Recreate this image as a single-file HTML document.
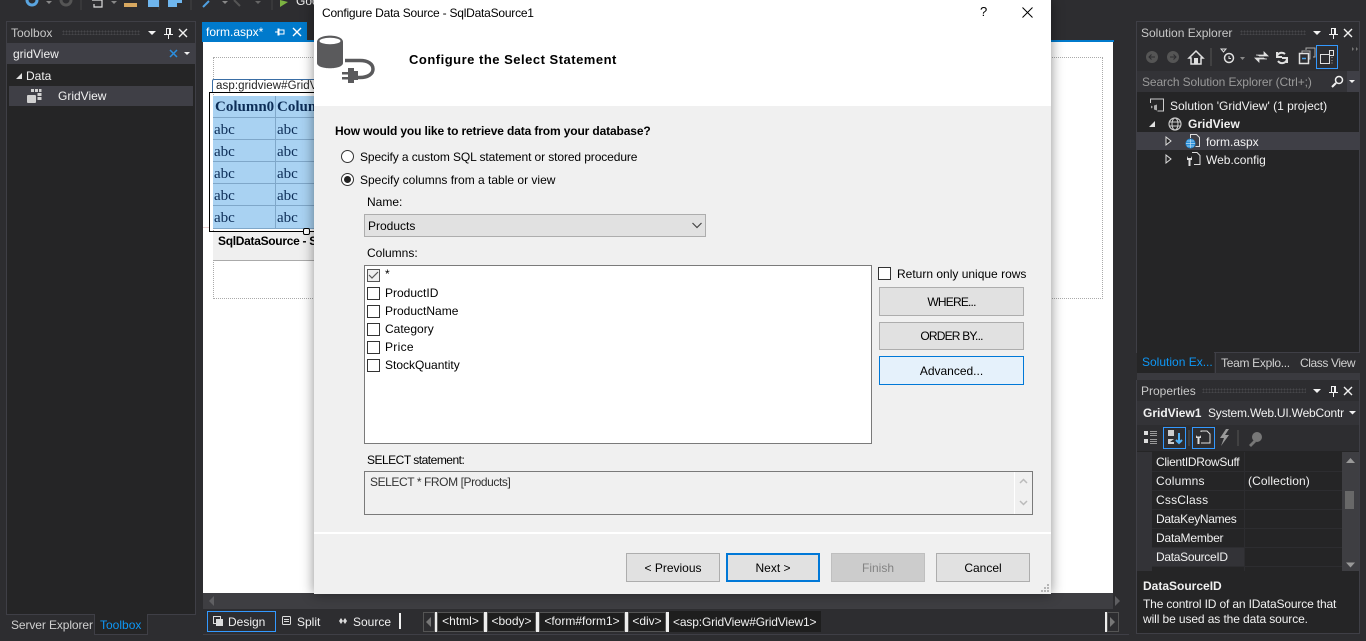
<!DOCTYPE html>
<html><head><meta charset="utf-8"><style>
html,body{margin:0;padding:0;background:#2d2d30;width:1366px;height:641px;overflow:hidden}
body{position:relative;font-family:"Liberation Sans",sans-serif;font-size:12px;color:#f1f1f1}
.a,.t,.b{position:absolute}
.t{white-space:nowrap;line-height:16px;letter-spacing:0}
.k{color:#000}
.b{box-sizing:border-box;background:#e1e1e1;border:1px solid #adadad;color:#000;text-align:center;line-height:29px;letter-spacing:0}
.cb{position:absolute;box-sizing:border-box;width:13px;height:13px;background:#fff;border:1px solid #333;left:367px}
.cell{position:absolute;box-sizing:border-box;font:15px "Liberation Serif",serif;color:#0c2d57;padding:2px 0 0 1px;background:#a9d2f2;line-height:20px}
svg{position:absolute;overflow:visible}
.sep{position:absolute;background:#2d2d30}
.path{position:absolute;box-sizing:border-box;top:612px;height:20px;background:#1e1e1e;border:1px solid #555;line-height:17px;text-align:center;color:#f1f1f1}
</style></head><body>

<!-- top toolbar -->
<svg style="left:0;top:0" width="320" height="8">
<circle cx="32" cy="0" r="5" fill="none" stroke="#5aa5e0" stroke-width="3"/>
<path d="M46 1l6 0-3 3z" fill="#888"/>
<circle cx="66" cy="0" r="5" fill="none" stroke="#555" stroke-width="3"/>
<path d="M81 0v10M159 0v10M191 0v10M272 0v10" stroke="#444"/>
<path d="M92 0h10v7h-8v-3" fill="none" stroke="#ddd" stroke-width="1.2"/>
<path d="M111 1l6 0-3 3z" fill="#888"/>
<path d="M124 3h13v4h-13z" fill="#d8a860"/>
<rect x="148" y="0" width="11" height="7" fill="#6fb6ee"/>
<rect x="168" y="0" width="9" height="7" fill="#6fb6ee"/><rect x="175" y="0" width="7" height="3" fill="#6fb6ee"/>
<path d="M203 7l6-6" stroke="#4f9fe0" stroke-width="2"/><path d="M222 1l6 0-3 3z" fill="#888"/>
<path d="M234 0l6 6" stroke="#555" stroke-width="2"/><path d="M255 1l6 0-3 3z" fill="#666"/>
<path d="M280 0v7l8-5z" fill="#7db342"/>
</svg>
<div class="t" style="left:296px;top:-7px;color:#f1f1f1">Google</div>

<!-- Toolbox -->
<div class="a" style="left:6px;top:21px;width:190px;height:594px;box-sizing:border-box;border:1px solid #3f3f46;background:#252526"></div>
<div class="a" style="left:7px;top:22px;width:188px;height:21px;background:#2d2d30"></div>
<div class="t" style="left:11px;top:25px;color:#c8c8c8">Toolbox</div>
<div class="a" style="left:62px;top:30px;width:78px;height:5px;background:radial-gradient(#46464a 40%,transparent 45%) 0 0/3px 3px"></div>
<svg style="left:146px;top:28px" width="44" height="12"><path d="M2 3h8l-4 4z" fill="#f1f1f1"/><path d="M20 0h5v6h2v1h-4v4h-1v-4h-4v-1h2zM21 1v5h2v-5z" fill="#f1f1f1"/><path d="M33 1l8 8M41 1l-8 8" stroke="#f1f1f1" stroke-width="1.4"/></svg>
<div class="a" style="left:7px;top:43px;width:188px;height:21px;background:#3f3f46"></div>
<div class="t" style="left:13px;top:46px;color:#f1f1f1">gridView</div>
<svg style="left:169px;top:49px" width="22" height="10"><path d="M1 1l7 7M8 1l-7 7" stroke="#2b8fe0" stroke-width="1.5"/><path d="M15 3h6l-3 3z" fill="#f1f1f1"/></svg>
<svg style="left:15px;top:72px" width="8" height="8"><path d="M7 1v6h-6z" fill="#e0e0e0"/></svg>
<div class="t" style="left:26px;top:68px">Data</div>
<div class="a" style="left:9px;top:86px;width:184px;height:20px;background:#3f3f46"></div>
<svg style="left:27px;top:89px" width="15" height="14"><rect x="0" y="6" width="9" height="8" rx="1" fill="#d0d0d0"/><path d="M4 0h3v3h-3zM8 0h3v3h-3zM12 0h2.500v3h-2.500zM10.500 4h4v3h-4zM10.500 8h4v3h-4z" fill="#d0d0d0"/></svg>
<div class="t" style="left:58px;top:88px">GridView</div>
<div class="t" style="left:11px;top:617px;color:#d0d0d0;letter-spacing:-.1px">Server Explorer</div>
<div class="a" style="left:94px;top:614px;width:54px;height:21px;box-sizing:border-box;background:#252526;border:1px solid #3f3f46;border-top:0"></div>
<div class="t" style="left:100px;top:617px;color:#0e97f5">Toolbox</div>

<!-- Editor -->
<div class="a" style="left:202px;top:22px;width:105px;height:18px;background:#007acc"></div>
<div class="t" style="left:206px;top:24px;color:#fff">form.aspx*</div>
<svg style="left:274px;top:27px" width="30" height="10"><path d="M1 5h3M4 2v6h1v-1h5v-4h-5v-1zM5 3v4" stroke="#fff" fill="none" stroke-width="1"/><path d="M19 1l8 8M27 1l-8 8" stroke="#fff" stroke-width="1.4"/></svg>
<div class="a" style="left:202px;top:40px;width:912px;height:2px;background:#007acc"></div>
<div class="a" style="left:203px;top:42px;width:910px;height:551px;background:#fff"></div>
<div class="a" style="left:213px;top:57px;width:890px;height:242px;box-sizing:border-box;border:1px dotted #aaa"></div>
<div class="a" style="left:203px;top:593px;width:910px;height:16px;background:#3e3e42"></div>
<div class="a" style="left:1113px;top:42px;width:16px;height:567px;background:#2d2d30"></div>
<svg style="left:209px;top:596px" width="6" height="10"><path d="M5 0v10l-5-5z" fill="#5f5f62"/></svg>
<svg style="left:1115px;top:596px" width="6" height="10"><path d="M0 0v10l5-5z" fill="#5f5f62"/></svg>

<!-- grid -->
<div class="a" style="left:212px;top:79px;width:110px;height:13px;box-sizing:border-box;background:#fff;border:1px solid #3a6ea5;border-bottom:0;border-radius:2px 2px 0 0"></div>
<div class="t k" style="left:216px;top:78px;font-size:11.5px;color:#222;letter-spacing:.1px">asp:gridview#GridV</div>
<div class="a" style="left:209px;top:92px;width:110px;height:140px;box-sizing:border-box;border:1px solid #000"></div>
<div class="a" style="left:213px;top:96px;width:110px;height:133px;background:#7fa7c9"></div>
<div class="cell" style="left:213px;top:96px;width:62px;height:21px;font-weight:bold;padding-top:1px;padding-left:2px">Column0</div>
<div class="cell" style="left:276px;top:96px;width:50px;height:21px;font-weight:bold;padding-top:1px">Column</div>
<div class="cell" style="left:213px;top:118px;width:62px;height:21px">abc</div><div class="cell" style="left:276px;top:118px;width:50px;height:21px">abc</div>
<div class="cell" style="left:213px;top:140px;width:62px;height:21px">abc</div><div class="cell" style="left:276px;top:140px;width:50px;height:21px">abc</div>
<div class="cell" style="left:213px;top:162px;width:62px;height:21px">abc</div><div class="cell" style="left:276px;top:162px;width:50px;height:21px">abc</div>
<div class="cell" style="left:213px;top:184px;width:62px;height:21px">abc</div><div class="cell" style="left:276px;top:184px;width:50px;height:21px">abc</div>
<div class="cell" style="left:213px;top:206px;width:62px;height:22px">abc</div><div class="cell" style="left:276px;top:206px;width:50px;height:22px">abc</div>
<div class="a" style="left:203px;top:227px;width:6px;height:1px;background:#e8d0d0"></div>
<div class="a" style="left:213px;top:232px;width:110px;height:28px;background:#efefef;border-bottom:1px solid #aaa"></div>
<div class="t k" style="left:218px;top:233px;font-weight:bold;letter-spacing:-.3px">SqlDataSource - S</div>
<div class="a" style="left:303px;top:228px;width:7px;height:7px;box-sizing:border-box;background:#fff;border:1px solid #000;border-radius:2px"></div>

<!-- Dialog shadow & body -->
<div class="a" style="left:314px;top:0;width:737px;height:594px;background:#f0f0f0;box-shadow:0 0 12px rgba(0,0,0,.45)"></div>
<div class="a" style="left:314px;top:0;width:737px;height:106px;background:#fff"></div>
<div class="t k" style="left:322px;top:5px;letter-spacing:-.22px">Configure Data Source - SqlDataSource1</div>
<div class="t k" style="left:980px;top:4px;font-size:13px">?</div>
<svg style="left:1022px;top:7px" width="11" height="11"><path d="M.5.5l10 10M10.500.5l-10 10" stroke="#000" stroke-width="1"/></svg>
<!-- db icon -->
<svg style="left:317px;top:34px" width="60" height="52">
<path d="M0 8C0-.5 26-.5 26 8V29C26 36 0 36 0 29z" fill="#5a5a5c"/>
<ellipse cx="13" cy="7" rx="10.500" ry="3.200" fill="#fff"/>
<path d="M28 26.500h15c8 0 13 3.500 13 8.500s-5 8.500-13 8.500h-3" fill="none" stroke="#5a5a5c" stroke-width="3.500"/>
<path d="M25 38h6v2.500h-6zM25 43h6v2.500h-6z" fill="#5a5a5c"/>
<path d="M31 34h6v3h4v9h-4v3h-6z" fill="#5a5a5c"/>
</svg>
<div class="t k" style="left:409px;top:52px;font-size:13px;font-weight:bold;letter-spacing:.5px">Configure the Select Statement</div>

<div class="t k" style="left:335px;top:123px;font-weight:bold;letter-spacing:-.13px">How would you like to retrieve data from your database?</div>
<svg style="left:341px;top:150px" width="14" height="36"><circle cx="6.500" cy="6.500" r="6" fill="#fff" stroke="#333"/><circle cx="6.500" cy="29.500" r="6" fill="#fff" stroke="#333"/><circle cx="6.500" cy="29.500" r="3.500" fill="#222"/></svg>
<div class="t k" style="left:360px;top:149px;letter-spacing:-.1px">Specify a custom SQL statement or stored procedure</div>
<div class="t k" style="left:360px;top:172px">Specify columns from a table or view</div>
<div class="t k" style="left:367px;top:194px">Name:</div>
<div class="a" style="left:364px;top:214px;width:342px;height:23px;box-sizing:border-box;background:#e1e1e1;border:1px solid #adadad"></div>
<div class="t k" style="left:368px;top:218px">Products</div>
<svg style="left:692px;top:222px" width="10" height="7"><path d="M.5 1l4.500 4.500L9.500 1" fill="none" stroke="#444" stroke-width="1.200"/></svg>
<div class="t k" style="left:367px;top:245px">Columns:</div>
<div class="a" style="left:364px;top:265px;width:508px;height:179px;box-sizing:border-box;background:#fff;border:1px solid #7a7a7a"></div>
<div class="cb" style="top:269px;border-color:#555;background:#eee"></div>
<svg style="left:368px;top:271px" width="11" height="9"><path d="M1 4l3 3 6-6" fill="none" stroke="#555" stroke-width="1.200"/></svg>
<div class="t k" style="left:385px;top:266px">*</div>
<div class="cb" style="top:287px"></div><div class="t k" style="left:385px;top:285px">ProductID</div>
<div class="cb" style="top:305px"></div><div class="t k" style="left:385px;top:303px">ProductName</div>
<div class="cb" style="top:323px"></div><div class="t k" style="left:385px;top:321px">Category</div>
<div class="cb" style="top:341px"></div><div class="t k" style="left:385px;top:339px;letter-spacing:.3px">Price</div>
<div class="cb" style="top:359px"></div><div class="t k" style="left:385px;top:357px">StockQuantity</div>
<div class="cb" style="left:878px;top:267px"></div>
<div class="t k" style="left:897px;top:266px">Return only unique rows</div>
<div class="b" style="left:879px;top:287px;width:145px;height:29px;letter-spacing:-.8px">WHERE...</div>
<div class="b" style="left:879px;top:322px;width:145px;height:28px;line-height:27px;letter-spacing:-.8px">ORDER BY...</div>
<div class="b" style="left:879px;top:356px;width:145px;height:29px;background:#e5f1fb;border-color:#0078d7">Advanced...</div>
<div class="t k" style="left:367px;top:452px;letter-spacing:-.5px">SELECT statement:</div>
<div class="a" style="left:364px;top:471px;width:669px;height:44px;box-sizing:border-box;background:#f0f0f0;border:1px solid #7a7a7a"></div>
<div class="a" style="left:1014px;top:472px;width:1px;height:42px;background:#fff"></div>
<svg style="left:1019px;top:478px" width="9" height="28"><path d="M1 5l3.500-3.500L8 5M1 23l3.500 3.500L8 23" fill="none" stroke="#bbb" stroke-width="1.500"/></svg>
<div class="t k" style="left:370px;top:474px;color:#333;letter-spacing:-.42px">SELECT * FROM [Products]</div>
<div class="a" style="left:314px;top:532px;width:737px;height:2px;background:#fff"></div>
<div class="b" style="left:626px;top:553px;width:94px;height:29px">&lt; Previous</div>
<div class="b" style="left:726px;top:553px;width:94px;height:29px;border:2px solid #0078d7;line-height:27px">Next &gt;</div>
<div class="b" style="left:831px;top:553px;width:94px;height:29px;background:#ccc;border-color:#bfbfbf;color:#838383">Finish</div>
<div class="b" style="left:936px;top:553px;width:94px;height:29px">Cancel</div>
<svg style="left:1041px;top:584px" width="9" height="9"><path d="M6 0h2v2h-2zM3 3h2v2h-2zM6 3h2v2h-2zM0 6h2v2h-2zM3 6h2v2h-2zM6 6h2v2h-2z" fill="#b5b5b5"/></svg>

<!-- bottom bar -->
<div class="a" style="left:203px;top:609px;width:926px;height:25px;background:#2d2d30;border-bottom:1px solid #3f3f46"></div>
<div class="a" style="left:207px;top:611px;width:69px;height:21px;box-sizing:border-box;border:1px solid #3399ff"></div>
<svg style="left:213px;top:616px" width="11" height="11"><path d="M.5.5h7v7h-7z" fill="none" stroke="#ddd"/><rect x="3" y="3" width="7" height="7" fill="#ddd"/></svg>
<div class="t" style="left:228px;top:614px">Design</div>
<svg style="left:282px;top:616px" width="10" height="10"><rect x=".5" y=".5" width="8" height="8" rx="1" fill="none" stroke="#ddd"/><path d="M2 3.500h5M2 5.500h5" stroke="#ddd"/></svg>
<div class="t" style="left:297px;top:614px">Split</div>
<svg style="left:338px;top:617px" width="10" height="8"><path d="M3 1L1 4l2 3 2-3zM7 1L5 4l2 3 2-3z" fill="#ddd"/></svg>
<div class="t" style="left:353px;top:614px">Source</div>
<div class="a" style="left:399px;top:613px;width:2px;height:16px;background:#f1f1f1"></div>
<div class="a" style="left:423px;top:612px;width:12px;height:20px;box-sizing:border-box;border:1px solid #555"></div>
<svg style="left:426px;top:617px" width="6" height="10"><path d="M5 0v10l-5-5z" fill="#777"/></svg>
<div class="a" style="left:435px;top:612px;width:2px;height:20px;background:#eee"></div>
<div class="path" style="left:437px;width:47px">&lt;html&gt;</div>
<div class="a" style="left:484px;top:612px;width:3px;height:20px;background:#eee"></div>
<div class="path" style="left:487px;width:49px">&lt;body&gt;</div>
<div class="a" style="left:536px;top:612px;width:3px;height:20px;background:#eee"></div>
<div class="path" style="left:539px;width:86px">&lt;form#form1&gt;</div>
<div class="a" style="left:625px;top:612px;width:3px;height:20px;background:#eee"></div>
<div class="path" style="left:628px;width:38px">&lt;div&gt;</div>
<div class="a" style="left:666px;top:612px;width:3px;height:20px;background:#eee"></div>
<div class="a" style="left:669px;top:611px;width:152px;height:21px;background:#1e1e1e"></div>
<div class="t" style="left:673px;top:614px;letter-spacing:-.15px">&lt;asp:GridView#GridView1&gt;</div>
<div class="a" style="left:1105px;top:612px;width:2px;height:20px;background:#eee"></div>
<div class="a" style="left:1107px;top:612px;width:12px;height:20px;box-sizing:border-box;border:1px solid #555"></div>
<svg style="left:1110px;top:617px" width="6" height="10"><path d="M0 0v10l5-5z" fill="#777"/></svg>

<!-- Solution Explorer -->
<div class="a" style="left:1136px;top:21px;width:224px;height:332px;box-sizing:border-box;border:1px solid #3f3f46;background:#252526"></div>
<div class="a" style="left:1137px;top:22px;width:222px;height:49px;background:#2d2d30"></div>
<div class="t" style="left:1141px;top:25px;color:#c8c8c8">Solution Explorer</div>
<div class="a" style="left:1240px;top:30px;width:66px;height:5px;background:radial-gradient(#46464a 40%,transparent 45%) 0 0/3px 3px"></div>
<svg style="left:1311px;top:28px" width="44" height="12"><path d="M2 3h8l-4 4z" fill="#f1f1f1"/><path d="M20 0h5v6h2v1h-4v4h-1v-4h-4v-1h2zM21 1v5h2v-5z" fill="#f1f1f1"/><path d="M33 1l8 8M41 1l-8 8" stroke="#f1f1f1" stroke-width="1.400"/></svg>
<svg style="left:1145px;top:45px" width="214" height="24">
<circle cx="7" cy="12" r="6" fill="#555"/><path d="M10 12H4M6.500 9.500L4 12l2.500 2.500" stroke="#2d2d30" fill="none"/>
<circle cx="28" cy="12" r="6" fill="#555"/><path d="M25 12h6M28.500 9.500L31 12l-2.500 2.500" stroke="#2d2d30" fill="none"/>
<path d="M44 13l7-7 7 7h-2v6h-10v-6z" fill="none" stroke="#e0e0e0" stroke-width="1.500"/>
<path d="M49 13h4v6h-4z" fill="#e0e0e0"/>
<path d="M66 3v18" stroke="#555"/>
<circle cx="84" cy="13" r="4.500" fill="none" stroke="#e0e0e0" stroke-width="1.500"/><path d="M84 11v2.500h2M76 4h5l-2.500 3z" stroke="#e0e0e0" fill="none"/>
<path d="M95 12h5l-2.500 3z" fill="#888"/>
<path d="M111 10h8v-3l4 4h-9M122 14h-8v3l-4-4h9" fill="#e0e0e0" stroke="#e0e0e0" stroke-width=".8"/>
<path d="M140 9a5 5 0 0 0-8 2M133 16a5 5 0 0 0 9-2M132 7v5h5M142 18v-5h-5" fill="none" stroke="#e0e0e0" stroke-width="2"/>
<path d="M157 8V6h8v8h-2M161 5V3h9v9h-2" fill="none" stroke="#aaa"/>
<rect x="154.500" y="8.500" width="9" height="10" fill="#2d2d30" stroke="#e0e0e0" stroke-width="1.500"/><path d="M157 13.500h4" stroke="#4aa3e8" stroke-width="1.500"/>
<rect x="171.500" y=".5" width="21" height="23" fill="none" stroke="#3399ff"/>
<path d="M175.500 9.500h9v9h-9z" fill="none" stroke="#e0e0e0"/><path d="M184.500 5.500h4v5h-4z" fill="none" stroke="#e0e0e0"/><path d="M187 12v1M187 15v1M187 17.500v1" stroke="#aaa"/>
<path d="M207 2v4l2-2zM211 2v4l2-2z" fill="#777"/>
</svg>
<div class="a" style="left:1137px;top:71px;width:222px;height:21px;background:#333337"></div>
<div class="t" style="left:1142px;top:74px;color:#999;letter-spacing:-.1px">Search Solution Explorer (Ctrl+;)</div>
<div class="a" style="left:1347px;top:71px;width:12px;height:21px;background:#3f3f46"></div>
<svg style="left:1331px;top:75px" width="26" height="13"><circle cx="8" cy="5" r="3.500" fill="none" stroke="#f1f1f1" stroke-width="1.500"/><path d="M5 8l-4 4" stroke="#f1f1f1" stroke-width="2"/><path d="M18 5h6l-3 3z" fill="#f1f1f1"/></svg>
<svg style="left:1150px;top:98px" width="14" height="15"><path d="M.5 5V1h13v12h-6" fill="none" stroke="#ccc"/><path d="M1 7.500l2 1.500-2 1.500zM4 7.500l3-1v6l-3-1z" fill="#aaa"/></svg>
<div class="t" style="left:1170px;top:98px">Solution 'GridView' (1 project)</div>
<svg style="left:1148px;top:120px" width="8" height="8"><path d="M7 1v6h-6z" fill="#e0e0e0"/></svg>
<svg style="left:1168px;top:117px" width="14" height="14"><circle cx="7" cy="7" r="6" fill="none" stroke="#ccc" stroke-width="1.200"/><ellipse cx="7" cy="7" rx="3" ry="6" fill="none" stroke="#ccc"/><path d="M1 5h12M1 9h12" stroke="#ccc"/></svg>
<div class="t" style="left:1188px;top:116px;font-weight:bold">GridView</div>
<div class="a" style="left:1137px;top:132px;width:222px;height:18px;background:#3f3f46"></div>
<svg style="left:1165px;top:136px" width="8" height="10"><path d="M1 1l5 4-5 4z" fill="#252526" stroke="#e0e0e0"/></svg>
<svg style="left:1185px;top:134px" width="16" height="15"><path d="M5.500 4V.5h6l3 3v9h-4" fill="none" stroke="#ddd"/><circle cx="5.500" cy="9.500" r="5" fill="#2a8fd8"/><path d="M1 9.500h9M5.500 5v9M2 7h7M2 12h7" stroke="#bfe0f5" stroke-width=".7"/></svg>
<div class="t" style="left:1206px;top:134px">form.aspx</div>
<svg style="left:1165px;top:154px" width="8" height="10"><path d="M1 1l5 4-5 4z" fill="#252526" stroke="#e0e0e0"/></svg>
<svg style="left:1186px;top:152px" width="16" height="15"><path d="M6 .5h5l3 3v9h-6" fill="none" stroke="#ddd"/><path d="M1 4v4h1.500v6h2v-6h1.500v-4l-1 2h-3z" fill="#ddd"/></svg>
<div class="t" style="left:1206px;top:152px">Web.config</div>
<!-- tabs -->
<div class="a" style="left:1137px;top:352px;width:77px;height:21px;background:#252526"></div>
<div class="t" style="left:1142px;top:354px;color:#0e97f5">Solution Ex...</div>
<div class="a" style="left:1215px;top:353px;width:145px;height:20px;background:#2d2d30;border-left:1px solid #3f3f46"></div>
<div class="t" style="left:1221px;top:355px;color:#d0d0d0;letter-spacing:-.3px">Team Explo...</div>
<div class="t" style="left:1300px;top:355px;color:#d0d0d0;letter-spacing:-.4px">Class View</div>
<div class="a" style="left:1137px;top:373px;width:223px;height:7px;background:#3a3a3f"></div>

<!-- Properties -->
<div class="a" style="left:1136px;top:380px;width:224px;height:254px;box-sizing:border-box;border:1px solid #3f3f46;border-top:0;background:#252526"></div>
<div class="a" style="left:1137px;top:380px;width:222px;height:21px;background:#2d2d30"></div>
<div class="t" style="left:1141px;top:383px;color:#c8c8c8">Properties</div>
<div class="a" style="left:1202px;top:388px;width:104px;height:5px;background:radial-gradient(#46464a 40%,transparent 45%) 0 0/3px 3px"></div>
<svg style="left:1311px;top:386px" width="44" height="12"><path d="M2 3h8l-4 4z" fill="#f1f1f1"/><path d="M20 0h5v6h2v1h-4v4h-1v-4h-4v-1h2zM21 1v5h2v-5z" fill="#f1f1f1"/><path d="M33 1l8 8M41 1l-8 8" stroke="#f1f1f1" stroke-width="1.400"/></svg>
<div class="a" style="left:1137px;top:401px;width:222px;height:24px;background:#333337"></div>
<div class="t" style="left:1143px;top:405px;font-weight:bold">GridView1</div>
<div class="t" style="left:1208px;top:405px;width:136px;overflow:hidden;letter-spacing:-.2px">System.Web.UI.WebContr</div>
<svg style="left:1349px;top:411px" width="7" height="4"><path d="M0 0h7l-3.500 3.500z" fill="#f1f1f1"/></svg>
<div class="a" style="left:1137px;top:425px;width:222px;height:26px;background:#2d2d30"></div>
<svg style="left:1143px;top:427px" width="125" height="22">
<path d="M1 4h4v4h-4zM1 12h4v4h-4z" fill="#ddd"/><path d="M7 4.500h7M7 6.500h7M7 8.500h7M7 12.500h7M7 14.500h7M7 16.500h7" stroke="#999"/>
<rect x="20.500" y=".5" width="22" height="21" fill="none" stroke="#3399ff"/>
<path d="M25 3h6v6h-6zM25 12h6l-4 3h4v2h-6z" fill="#ccc"/><path d="M36 6v10M33 13l3 3 3-3" fill="none" stroke="#4fb0f5" stroke-width="2"/>
<path d="M46 3v16" stroke="#555"/>
<rect x="49.500" y=".5" width="22" height="21" fill="none" stroke="#3399ff"/>
<path d="M58 5v-1h6l3 3v9h-9" fill="none" stroke="#ddd"/><path d="M53 8v3h1.500v6h2v-6h1.500v-3l-1 1.500h-3z" fill="#ddd"/>
<path d="M83 2l-6 9h4l-3 8 8-11h-4l4-6z" fill="#999"/>
<path d="M95 3v16" stroke="#555"/>
<circle cx="114" cy="10" r="5" fill="#777"/><path d="M111 13l-5 5 2 2 5-5z" fill="#777"/>
</svg>
<!-- property grid -->
<div class="a" style="left:1137px;top:452px;width:205px;height:119px;background:#333337"></div>
<div class="a" style="left:1152px;top:452px;width:190px;height:119px;background:#252526"></div>
<div class="a" style="left:1152px;top:548px;width:92px;height:18px;background:#333337"></div>
<div class="sep" style="left:1152px;top:471px;width:190px;height:1px"></div>
<div class="sep" style="left:1152px;top:490px;width:190px;height:1px"></div>
<div class="sep" style="left:1152px;top:509px;width:190px;height:1px"></div>
<div class="sep" style="left:1152px;top:528px;width:190px;height:1px"></div>
<div class="sep" style="left:1152px;top:547px;width:190px;height:1px"></div>
<div class="sep" style="left:1152px;top:566px;width:190px;height:1px"></div>
<div class="sep" style="left:1244px;top:452px;width:1px;height:119px"></div>
<div class="t" style="left:1156px;top:454px;width:87px;overflow:hidden;letter-spacing:-.3px">ClientIDRowSuff</div>
<div class="t" style="left:1156px;top:473px;letter-spacing:.2px">Columns</div>
<div class="t" style="left:1248px;top:473px;letter-spacing:.1px">(Collection)</div>
<div class="t" style="left:1156px;top:492px;letter-spacing:.2px">CssClass</div>
<div class="t" style="left:1156px;top:511px;letter-spacing:-.3px">DataKeyNames</div>
<div class="t" style="left:1156px;top:530px;letter-spacing:-.2px">DataMember</div>
<div class="t" style="left:1156px;top:549px;letter-spacing:-.3px">DataSourceID</div>
<div class="a" style="left:1342px;top:452px;width:17px;height:119px;background:#3e3e42"></div>
<div class="a" style="left:1345px;top:491px;width:9px;height:18px;background:#686868"></div>
<svg style="left:1346px;top:458px" width="9" height="110"><path d="M0 5l4.500-5 4.500 5z" fill="#999"/><path d="M0 105h9l-4.500 5z" fill="#999" transform="translate(0 -.5)"/></svg>
<div class="t" style="left:1143px;top:578px;font-weight:bold">DataSourceID</div>
<div class="t" style="left:1143px;top:596px;letter-spacing:-.15px">The control ID of an IDataSource that</div>
<div class="t" style="left:1143px;top:611px;letter-spacing:-.1px">will be used as the data source.</div>
</body></html>
